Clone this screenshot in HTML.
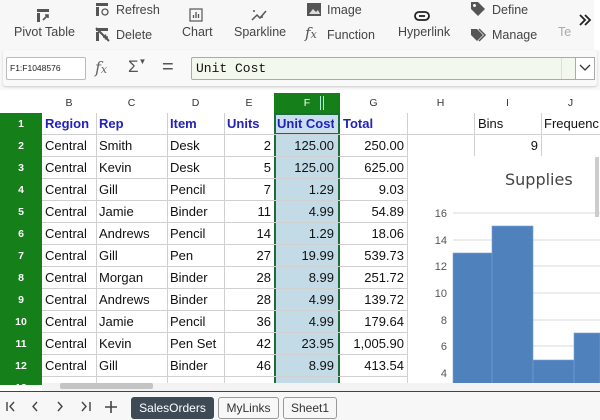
<!DOCTYPE html>
<html><head><style>
*{margin:0;padding:0;box-sizing:border-box}
body{width:600px;height:420px;overflow:hidden;background:#fff;font-family:"Liberation Sans",sans-serif;position:relative}
.a{position:absolute}
.tb{color:#444;font-size:12.5px;white-space:nowrap}
.grid div{position:absolute;font-size:13px;color:#111;line-height:22px;height:22px;white-space:nowrap;overflow:hidden}
.grid .rh{color:#fff;font-size:10.5px;font-weight:bold;text-align:center;width:42px;left:0}
.grid .ch{font-size:10.5px;color:#333;text-align:center;top:93px;height:20px;line-height:20px}
.grid .r{text-align:right}
.grid .h{color:#2222bb;font-weight:bold}
</style></head><body>
<div class="a" style="left:0;top:0;width:600px;height:90px;background:#f7f7f7"></div>
<div class="a" style="left:594px;top:0;width:6px;height:50px;background:#fff"></div>
<svg class="a" style="left:36px;top:8px" width="16" height="16"><rect x="1" y="1" width="12" height="3" fill="#555"/><rect x="1" y="5" width="3" height="9" fill="#555"/><path d="M7 12 l5 -5 M9 7h3v3" stroke="#555" stroke-width="1.6" fill="none"/></svg>
<div class="a tb" style="left:14px;top:25px">Pivot Table</div>
<svg class="a" style="left:95px;top:2px" width="14" height="14"><rect x="1" y="1" width="12" height="3" fill="#555"/><rect x="1" y="5" width="3" height="9" fill="#555"/><circle cx="10" cy="10" r="3" stroke="#555" stroke-width="1.3" fill="none"/></svg>
<div class="a tb" style="left:116px;top:3px">Refresh</div>
<svg class="a" style="left:95px;top:27px" width="15" height="15"><rect x="1" y="1" width="12" height="3" fill="#555"/><rect x="1" y="5" width="3" height="9" fill="#555"/><path d="M1 1 L14 14" stroke="#555" stroke-width="2"/><path d="M8 10h5M10.5 7.5v5" stroke="#555" stroke-width="1.5"/></svg>
<div class="a tb" style="left:116px;top:28px">Delete</div>
<svg class="a" style="left:189px;top:8px" width="14" height="14"><rect x="1" y="1" width="12" height="12" stroke="#555" stroke-width="1.2" fill="none"/><path d="M4.5 10V7M7 10V4M9.5 10V6" stroke="#555" stroke-width="1.3"/></svg>
<div class="a tb" style="left:182px;top:25px">Chart</div>
<svg class="a" style="left:250px;top:8px" width="18" height="14"><path d="M2 12 L7 7 L10 10 L16 3" stroke="#555" stroke-width="1.5" fill="none"/><circle cx="4" cy="3" r="1" fill="#555"/><circle cx="12" cy="9" r="1" fill="#555"/></svg>
<div class="a tb" style="left:234px;top:25px">Sparkline</div>
<svg class="a" style="left:307px;top:3px" width="14" height="13"><rect x="0" y="0" width="14" height="13" fill="#555"/><path d="M2 11 L6 6 L9 9 L11 7 L13 11Z" fill="#ddd"/></svg>
<div class="a tb" style="left:327px;top:3px">Image</div>
<div class="a" style="left:305px;top:24px;font-family:'DejaVu Serif',serif;font-style:italic;font-size:15px;color:#555">f<span style="font-size:11px">x</span></div>
<div class="a tb" style="left:327px;top:28px">Function</div>
<svg class="a" style="left:414px;top:11px" width="16" height="10"><rect x="1" y="1" width="14" height="8" rx="4" stroke="#222" stroke-width="1.8" fill="none"/><path d="M5 5h6" stroke="#222" stroke-width="1.8"/></svg>
<div class="a tb" style="left:398px;top:25px">Hyperlink</div>
<svg class="a" style="left:470px;top:1px" width="16" height="16"><path d="M1 1h7l7 7-7 7-7-7z" fill="#555"/><circle cx="4.5" cy="4.5" r="1.5" fill="#f7f7f7"/></svg>
<div class="a tb" style="left:492px;top:3px">Define</div>
<svg class="a" style="left:470px;top:28px" width="18" height="14"><path d="M1 1h6l6 6-6 6-6-6z" fill="#555"/><path d="M9 1l6 6-6 6" stroke="#555" stroke-width="1.5" fill="none"/></svg>
<div class="a tb" style="left:492px;top:28px">Manage</div>
<div class="a tb" style="left:558px;top:25px;color:#aaa">Te</div>
<svg class="a" style="left:578px;top:14px" width="14" height="12"><path d="M2 1l5 5-5 5M7 1l5 5-5 5" stroke="#222" stroke-width="1.8" fill="none"/></svg>
<div class="a" style="left:3px;top:50px;width:594px;height:36px;background:#f9f9f9;border-radius:3px;box-shadow:0 1px 2px #ccc"></div>
<div class="a" style="left:6px;top:57px;width:80px;height:23px;background:#fff;border:1px solid #bbb;border-radius:2px;font-size:8.5px;line-height:21px;padding-left:3px;color:#222">F1:F1048576</div>
<div class="a" style="left:95px;top:58px;font-family:'DejaVu Serif',serif;font-style:italic;font-size:16px;color:#666">f<span style="font-size:11px">x</span></div>
<div class="a" style="left:128px;top:57px;font-size:17px;color:#555">Σ<span style="font-size:8px;vertical-align:top">▼</span></div>
<div class="a" style="left:162px;top:56px;font-size:20px;color:#555">=</div>
<div class="a" style="left:191px;top:57px;width:404px;height:23px;background:#f2f8ee;border:1px solid #aaa;border-radius:2px;font-family:'Liberation Mono',monospace;font-size:13px;line-height:21px;padding-left:4px;color:#111">Unit Cost</div>
<div class="a" style="left:561px;top:58px;width:1px;height:21px;background:#ddd"></div>
<div class="a" style="left:575px;top:57px;width:20px;height:23px;background:#fff;border:1px solid #aaa"></div>
<svg class="a" style="left:579px;top:63px" width="12" height="10"><path d="M1 2l5 5 5-5" stroke="#333" stroke-width="1.3" fill="none"/></svg>
<div class="a" style="left:0;top:90px;width:600px;height:23px;background:#fff"></div>
<div class="a" style="left:0;top:113px;width:42px;height:272px;background:#157f1a"></div>
<div class="a" style="left:274px;top:93px;width:66px;height:20px;background:#157f1a"></div>
<div class="a" style="left:320px;top:96px;width:4px;height:14px;border-left:1px solid #aed;border-right:1px solid #aed"></div>
<div class="a" style="left:274px;top:113px;width:66px;height:272px;background:#c3dbe6;border-left:2px solid #1f6b3e;border-right:2px solid #1f6b3e"></div>
<div class="a" style="left:274px;top:113px;width:66px;height:22px;border:2px solid #1f6b3e;background:#c9dff0"></div>
<svg class="a" style="left:0;top:113px" width="600" height="272">
<g stroke="#d0d0d0" stroke-width="1">
<line x1="42" y1="21.5" x2="600" y2="21.5"/><line x1="42" y1="43.5" x2="408" y2="43.5"/><line x1="42" y1="65.5" x2="408" y2="65.5"/><line x1="42" y1="87.5" x2="408" y2="87.5"/><line x1="42" y1="109.5" x2="408" y2="109.5"/><line x1="42" y1="131.5" x2="408" y2="131.5"/><line x1="42" y1="153.5" x2="408" y2="153.5"/><line x1="42" y1="175.5" x2="408" y2="175.5"/><line x1="42" y1="197.5" x2="408" y2="197.5"/><line x1="42" y1="219.5" x2="408" y2="219.5"/><line x1="42" y1="241.5" x2="408" y2="241.5"/><line x1="42" y1="263.5" x2="408" y2="263.5"/>
<line x1="96.5" y1="0" x2="96.5" y2="272"/><line x1="167.5" y1="0" x2="167.5" y2="272"/><line x1="224.5" y1="0" x2="224.5" y2="272"/><line x1="407.5" y1="0" x2="407.5" y2="272"/><line x1="474.5" y1="0" x2="474.5" y2="43"/><line x1="541.5" y1="0" x2="541.5" y2="43"/>
</g></svg>
<div class="grid">
<div class="ch" style="left:42px;width:54px">B</div><div class="ch" style="left:96px;width:71px">C</div><div class="ch" style="left:167px;width:57px">D</div><div class="ch" style="left:224px;width:50px">E</div><div class="ch" style="left:274px;width:66px;color:#fff">F</div><div class="ch" style="left:340px;width:67px">G</div><div class="ch" style="left:407px;width:67px">H</div><div class="ch" style="left:474px;width:67px">I</div><div class="ch" style="left:541px;width:59px">J</div>
</div>
<div class="grid" id="g"></div>
<div class="a" style="left:409px;top:156px;width:191px;height:229px;background:#fff"></div>
<div class="a" style="left:505px;top:170px;font-size:16px;color:#444;font-family:'DejaVu Sans',sans-serif">Supplies</div>
<svg class="a" style="left:409px;top:156px" width="191" height="229">
<g stroke="#d9d9d9"><line x1="44" y1="57" x2="191" y2="57"/><line x1="44" y1="84" x2="191" y2="84"/><line x1="44" y1="110" x2="191" y2="110"/><line x1="44" y1="137" x2="191" y2="137"/><line x1="44" y1="164" x2="191" y2="164"/><line x1="44" y1="190" x2="191" y2="190"/><line x1="44" y1="217" x2="191" y2="217"/></g>
<g fill="#4f81bd" stroke="#7aa0cf" stroke-width="0.6"><rect x="44" y="97" width="39" height="132"/><rect x="83" y="70" width="41" height="159"/><rect x="124" y="204" width="41" height="25"/><rect x="165" y="177" width="26" height="52"/></g>
<g font-size="11" fill="#555" text-anchor="end" font-family="Liberation Sans"><text x="38" y="61">16</text><text x="38" y="88">14</text><text x="38" y="114">12</text><text x="38" y="141">10</text><text x="38" y="168">8</text><text x="38" y="194">6</text><text x="38" y="221">4</text></g>
</svg>
<div class="a" style="left:595px;top:157px;width:4px;height:60px;background:#ccc"></div>
<div class="a" style="left:42px;top:383px;width:558px;height:8px;background:#f3f3f3"></div>
<div class="a" style="left:60px;top:383px;width:93px;height:6px;background:#c4c4c4;border-radius:2px"></div>
<div class="a" style="left:0;top:391px;width:600px;height:29px;background:#f7f7f7;border-top:1px solid #444"></div>
<svg class="a" style="left:4px;top:399px" width="120" height="16"><g stroke="#444" stroke-width="1.4" fill="none"><path d="M3 3v9M10 3l-4 4.5 4 4.5"/><path d="M33 3l-4 4.5 4 4.5"/><path d="M54 3l4 4.5-4 4.5"/><path d="M78 3l4 4.5-4 4.5M86 3v9"/><path d="M107 2v12M101 8h12" stroke-width="1.6"/></g></svg>
<div class="a" style="left:131px;top:397px;width:83px;height:22px;background:#3f4a57;border-radius:3px;color:#fff;font-size:12px;line-height:22px;text-align:center">SalesOrders</div>
<div class="a" style="left:218px;top:397px;width:61px;height:22px;border:1px solid #999;border-radius:3px;color:#333;font-size:12px;line-height:20px;text-align:center;background:#f7f7f7">MyLinks</div>
<div class="a" style="left:283px;top:397px;width:54px;height:22px;border:1px solid #999;border-radius:3px;color:#333;font-size:12px;line-height:20px;text-align:center;background:#f7f7f7">Sheet1</div>
<script>
var d=[["Region","Rep","Item","Units","Unit Cost","Total"],
["Central","Smith","Desk","2","125.00","250.00"],["Central","Kevin","Desk","5","125.00","625.00"],["Central","Gill","Pencil","7","1.29","9.03"],["Central","Jamie","Binder","11","4.99","54.89"],["Central","Andrews","Pencil","14","1.29","18.06"],["Central","Gill","Pen","27","19.99","539.73"],["Central","Morgan","Binder","28","8.99","251.72"],["Central","Andrews","Binder","28","4.99","139.72"],["Central","Jamie","Pencil","36","4.99","179.64"],["Central","Kevin","Pen Set","42","23.95","1,005.90"],["Central","Gill","Binder","46","8.99","413.54"]];
var L=[42,96,167,224,274,340],W=[54,71,57,50,66,67],h="";
for(var i=0;i<13;i++){var t=113+i*22;h+='<div class="rh" style="top:'+t+'px">'+(i+1)+'</div>';
if(i<12)for(var j=0;j<6;j++){var r=i>0&&j>2,s='left:'+(L[j]+3)+'px;top:'+t+'px;width:'+(W[j]-(j==4?9:6))+'px';h+='<div class="'+(i==0?'h':'')+(r?' r':'')+'" style="'+s+'">'+d[i][j]+'</div>';}}
h+='<div style="left:478px;top:113px">Bins</div><div style="left:544px;top:113px">Frequenc</div><div class="r" style="left:476px;top:135px;width:62px">9</div>';
document.getElementById("g").innerHTML=h;
</script>
</body></html>
